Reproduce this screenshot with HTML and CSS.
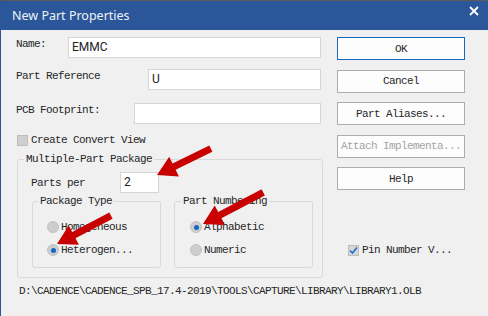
FILE: index.html
```html
<!DOCTYPE html>
<html lang="en">
<head>
    <meta charset="UTF-8">
    <title>New Part Properties</title>
    <link rel="stylesheet" href="styles.css">
</head>
<body>
    <div class="window">
        <div class="titlebar">
            <span class="title">New Part Properties</span>
            <svg class="close" width="10" height="10" viewBox="0 0 10 10">
                <path d="M1 1 L9 9 M9 1 L1 9" stroke="#fff" stroke-width="1.8"/>
            </svg>
        </div>

        <div class="content">
            <div class="left">
                <div class="row first">
                    <label>Name:</label>
                    <div class="field name">EMMC</div>
                </div>
                <div class="row second">
                    <label>Part Reference</label>
                    <div class="field ref">U</div>
                </div>
                <div class="row third">
                    <label>PCB Footprint:</label>
                    <div class="field pcb"></div>
                </div>

                <div class="check-row convert">
                    <span class="check"></span>Create Convert View
                </div>

                <fieldset class="group outer">
                    <legend>Multiple-Part Package</legend>
                    <div class="parts-row">
                        <label>Parts per</label>
                        <div class="field parts">2</div>
                    </div>
                    <div class="subgroups">
                        <fieldset class="group sub pkg">
                            <legend>Package Type</legend>
                            <div class="radio-row"><span class="radio"></span>Homogeneous</div>
                            <div class="radio-row"><span class="radio on"></span>Heterogen...</div>
                        </fieldset>
                        <fieldset class="group sub num">
                            <legend>Part Numbering</legend>
                            <div class="radio-row"><span class="radio on"></span>Alphabetic</div>
                            <div class="radio-row"><span class="radio"></span>Numeric</div>
                        </fieldset>
                    </div>
                </fieldset>

                <div class="path">D:\CADENCE\CADENCE_SPB_17.4-2019\TOOLS\CAPTURE\LIBRARY\LIBRARY1.OLB</div>
            </div>

            <div class="right">
                <div class="buttons">
                    <button class="default">OK</button>
                    <button>Cancel</button>
                    <button>Part Aliases...</button>
                    <button class="disabled">Attach Implementa...</button>
                    <button>Help</button>
                </div>
                <div class="check-row pin">
                    <span class="check checked">
                        <svg width="9" height="9" viewBox="0 0 9 9">
                            <path d="M1 4.5 L3.5 7 L8 1.5" fill="none" stroke="#1a6fd0" stroke-width="1.6"/>
                        </svg>
                    </span>Pin Number V...
                </div>
            </div>
        </div>

        <svg class="arrows" width="488" height="316">
            <g fill="#c80000">
                <polygon transform="translate(156,175) rotate(153.9)" points="-60,-3.5 -19,-3.5 -19,-11 0,0 -19,11 -19,3.5 -60,3.5"/>
                <polygon transform="translate(56,244) rotate(152.2)" points="-61,-3.5 -19,-3.5 -19,-11 0,0 -19,11 -19,3.5 -61,3.5"/>
                <polygon transform="translate(202,224) rotate(152.3)" points="-68,-3.5 -19,-3.5 -19,-11 0,0 -19,11 -19,3.5 -68,3.5"/>
            </g>
        </svg>
    </div>
</body>
</html>
```

FILE: styles.css
```css
body {
    margin: 0;
    background: #f0f0f0;
}
.window {
    position: relative;
    width: 487px;
    height: 316px;
    border-left: 1px solid #2b579a;
    background: #f0f0f0;
    font-family: "Liberation Mono", monospace;
    font-size: 11px;
    letter-spacing: -0.6px;
    color: #262626;
    overflow: hidden;
}
.titlebar {
    display: flex;
    align-items: center;
    justify-content: space-between;
    height: 29px;
    border-top: 1px solid #5b5b5b;
    background: #2b579a;
    padding: 0 9px 0 11px;
}
.title {
    font-family: "Noto Sans", sans-serif;
    font-size: 12.5px;
    letter-spacing: 0;
    color: #eef2f8;
    margin-top: -1px;
}
.close {
    margin-top: -10px;
}
.content {
    display: flex;
}
.left {
    width: 305px;
    padding: 7px 0 0 15px;
}
.right {
    width: 128px;
    padding: 7px 0 0 16px;
}
.row {
    display: flex;
    justify-content: space-between;
    align-items: flex-start;
    line-height: 14px;
}
.row.second {
    margin-top: 11px;
}
.row.third {
    margin-top: 13px;
}
.field {
    box-sizing: border-box;
    height: 21px;
    background: #fff;
    border: 1px solid #d6d6d6;
    font-family: Roboto, sans-serif;
    font-size: 12px;
    letter-spacing: 0;
    line-height: 19px;
    color: #222;
    padding-left: 3px;
}
.field.name {
    width: 253px;
}
.field.ref {
    width: 173px;
}
.field.pcb {
    width: 187px;
}
.field.parts {
    width: 39px;
}
.check-row {
    display: flex;
    align-items: center;
    height: 14px;
    line-height: 14px;
}
.check {
    box-sizing: border-box;
    display: flex;
    align-items: center;
    justify-content: center;
    width: 11px;
    height: 11px;
    background: #cfcfcf;
    border: 1px solid #bdbdbd;
    margin-right: 3px;
}
.check.checked {
    background: #d6d6d6;
}
.convert {
    margin-top: 9px;
    margin-left: 1px;
}
.group {
    box-sizing: border-box;
    margin: 0;
    border: 1px solid #d9d9d9;
    border-radius: 3px;
}
.group legend {
    padding: 0 2px;
    line-height: 14px;
}
.outer {
    width: 304px;
    margin: 5px 0 0 1px;
    padding: 6px 9px 9px 14px;
}
.outer > legend {
    margin-left: -8px;
}
.parts-row {
    display: flex;
    align-items: center;
    height: 21px;
}
.parts-row label {
    width: 89px;
    margin-left: -1px;
    margin-top: 1px;
}
.subgroups {
    display: flex;
    gap: 13px;
    margin-top: 1px;
}
.sub {
    padding: 12px 0 10px 14px;
}
.sub legend {
    margin-left: -9px;
}
.pkg {
    width: 129px;
}
.num {
    width: 139px;
    padding-left: 15px;
}
.radio-row {
    display: flex;
    align-items: center;
    height: 14px;
    line-height: 14px;
}
.radio-row + .radio-row {
    margin-top: 9px;
}
.radio {
    box-sizing: border-box;
    display: flex;
    align-items: center;
    justify-content: center;
    width: 12px;
    height: 12px;
    border-radius: 50%;
    background: #cdcdcd;
    border: 1px solid #c2c2c2;
    margin-right: 2px;
}
.radio.on::after {
    content: "";
    width: 5px;
    height: 5px;
    border-radius: 50%;
    background: #1466c6;
}
.path {
    margin: 6px 0 0 3px;
    line-height: 14px;
    white-space: nowrap;
}
.buttons {
    display: flex;
    flex-direction: column;
    gap: 9.5px;
}
button {
    box-sizing: border-box;
    height: 23px;
    width: 128px;
    padding: 0;
    background: #fdfdfd;
    border: 1px solid #adadad;
    font-family: "Liberation Mono", monospace;
    font-size: 11px;
    letter-spacing: -0.6px;
    color: #262626;
}
button.default {
    border-color: #1a66c4;
}
button.disabled {
    color: #a3a3a3;
}
.pin {
    margin: 53px 0 0 11px;
}
.arrows {
    position: absolute;
    top: 0;
    left: 0;
    pointer-events: none;
}
```
